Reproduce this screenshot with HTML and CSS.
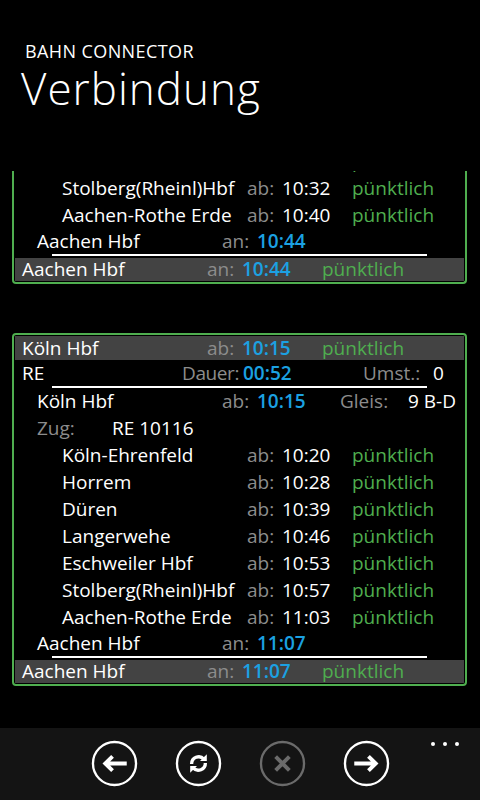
FILE: index.html
```html
<!DOCTYPE html>
<html lang="de">
<head>
<meta charset="utf-8">
<title>Verbindung</title>
<link rel="stylesheet" href="styles.css">
</head>
<body>
<div class="screen">
  <header class="header">
    <div class="app-name">BAHN CONNECTOR</div>
    <h1 class="page-title">Verbindung</h1>
  </header>

  <main class="list">
    <section class="card card-scrolled">
      <div class="row stop"><span class="name">Eschweiler Hbf</span><span class="lbl">ab:</span><span class="time">10:27</span><span class="ok">pünktlich</span></div>
      <div class="row stop"><span class="name">Stolberg(Rheinl)Hbf</span><span class="lbl">ab:</span><span class="time">10:32</span><span class="ok">pünktlich</span></div>
      <div class="row stop"><span class="name">Aachen-Rothe Erde</span><span class="lbl">ab:</span><span class="time">10:40</span><span class="ok">pünktlich</span></div>
      <div class="row arr"><span class="name">Aachen Hbf</span><span class="lbl">an:</span><span class="time blue">10:44</span></div>
      <div class="rule"></div>
      <div class="band band-bottom"><span class="name">Aachen Hbf</span><span class="lbl">an:</span><span class="time blue">10:44</span><span class="ok">pünktlich</span></div>
    </section>

    <section class="card">
      <div class="band band-top"><span class="name">Köln Hbf</span><span class="lbl">ab:</span><span class="time blue">10:15</span><span class="ok">pünktlich</span></div>
      <div class="row summary"><span class="name">RE</span><span class="lbl tight">Dauer:</span><span class="time blue">00:52</span><span class="lbl">Umst.:</span><span class="val">0</span></div>
      <div class="rule"></div>
      <div class="row dep"><span class="name">Köln Hbf</span><span class="lbl">ab:</span><span class="time blue">10:15</span><span class="lbl">Gleis:</span><span class="val">9 B-D</span></div>
      <div class="row zug"><span class="lbl">Zug:</span><span class="val">RE 10116</span></div>
      <div class="row stop"><span class="name">Köln-Ehrenfeld</span><span class="lbl">ab:</span><span class="time">10:20</span><span class="ok">pünktlich</span></div>
      <div class="row stop"><span class="name">Horrem</span><span class="lbl">ab:</span><span class="time">10:28</span><span class="ok">pünktlich</span></div>
      <div class="row stop"><span class="name">Düren</span><span class="lbl">ab:</span><span class="time">10:39</span><span class="ok">pünktlich</span></div>
      <div class="row stop"><span class="name">Langerwehe</span><span class="lbl">ab:</span><span class="time">10:46</span><span class="ok">pünktlich</span></div>
      <div class="row stop"><span class="name">Eschweiler Hbf</span><span class="lbl">ab:</span><span class="time">10:53</span><span class="ok">pünktlich</span></div>
      <div class="row stop"><span class="name">Stolberg(Rheinl)Hbf</span><span class="lbl">ab:</span><span class="time">10:57</span><span class="ok">pünktlich</span></div>
      <div class="row stop"><span class="name">Aachen-Rothe Erde</span><span class="lbl">ab:</span><span class="time">11:03</span><span class="ok">pünktlich</span></div>
      <div class="row arr"><span class="name">Aachen Hbf</span><span class="lbl">an:</span><span class="time blue">11:07</span></div>
      <div class="rule"></div>
      <div class="band band-bottom"><span class="name">Aachen Hbf</span><span class="lbl">an:</span><span class="time blue">11:07</span><span class="ok">pünktlich</span></div>
    </section>
  </main>

  <nav class="appbar">
    <button class="icon-btn" aria-label="zurück">
      <svg viewBox="0 0 48 48" width="47" height="47"><circle cx="24" cy="24" r="22" fill="none" stroke="#fff" stroke-width="2.4"/><path d="M36.5 24H15.5M22 16.8L14.6 24L22 31.2" fill="none" stroke="#fff" stroke-width="4"/></svg>
    </button>
    <button class="icon-btn" aria-label="aktualisieren">
      <svg viewBox="0 0 48 48" width="47" height="47"><circle cx="24" cy="24" r="22" fill="none" stroke="#fff" stroke-width="2.4"/><path d="M17 24.5A7.2 7.2 0 0 1 29.5 19.5" fill="none" stroke="#fff" stroke-width="3.4"/><path d="M25.5 21.5H32.5V14.5Z" fill="#fff"/><path d="M31 23.5A7.2 7.2 0 0 1 18.5 28.5" fill="none" stroke="#fff" stroke-width="3.4"/><path d="M22.5 26.5H15.5V33.5Z" fill="#fff"/></svg>
    </button>
    <button class="icon-btn" aria-label="abbrechen" disabled>
      <svg viewBox="0 0 48 48" width="47" height="47"><circle cx="24" cy="24" r="22" fill="none" stroke="#6b6b6b" stroke-width="2.4"/><path d="M17 17L31 31M31 17L17 31" fill="none" stroke="#6b6b6b" stroke-width="4"/></svg>
    </button>
    <button class="icon-btn" aria-label="weiter">
      <svg viewBox="0 0 48 48" width="47" height="47"><circle cx="24" cy="24" r="22" fill="none" stroke="#fff" stroke-width="2.4"/><path d="M11.5 24H32.5M26 16.8L33.4 24L26 31.2" fill="none" stroke="#fff" stroke-width="4"/></svg>
    </button>
    <div class="more"><span></span><span></span><span></span></div>
  </nav>
</div>
</body>
</html>
```

FILE: styles.css
```css
html, body {
  margin: 0;
  padding: 0;
  background: #000;
}

body {
  font-family: "Open Sans", "Segoe UI", sans-serif;
  color: #fff;
}

.screen {
  width: 480px;
  height: 800px;
  display: flex;
  flex-direction: column;
  overflow: hidden;
  background: #000;
}

.header {
  height: 171px;
  flex: none;
  padding-top: 40px;
  box-sizing: border-box;
}

.app-name {
  margin-left: 25px;
  font-size: 18px;
  line-height: 22px;
  letter-spacing: 0.4px;
}

.page-title {
  margin: 0 0 0 21px;
  font-size: 44px;
  line-height: 52px;
  font-weight: 300;
  letter-spacing: 1px;
}

.list {
  flex: 1;
  overflow: hidden;
}

.card {
  margin: 49px 0 0 12px;
  width: 455px;
  box-sizing: border-box;
  border: 2px solid #4fae4f;
  border-radius: 4px;
  padding: 1px;
  font-size: 19px;
  white-space: nowrap;
}

.card-scrolled {
  margin-top: -23px;
  border-top: 0;
  border-top-left-radius: 0;
  border-top-right-radius: 0;
  padding-top: 0;
}

.row, .band {
  display: grid;
  align-items: center;
  line-height: 27px;
  height: 27px;
}

.lbl { color: #8c8c8c; }
.tight { letter-spacing: -0.4px; }
.time { color: #fff; }
.blue { color: #1ba1e2; font-weight: 600; }
.ok { color: #4fae4f; }
.val { color: #fff; }

.band {
  background: #434343;
  padding-left: 7px;
  grid-template-columns: 185px 35px 80px auto;
}

.band-top {
  height: 24px;
  line-height: 24px;
}

.band-bottom {
  height: 23px;
  line-height: 23px;
  margin-top: 2px;
}

.summary {
  height: 26px;
  line-height: 26px;
  padding-left: 7px;
  grid-template-columns: 160px 61px 120px 70px auto;
}

.dep {
  padding-left: 22px;
  grid-template-columns: 185px 35px 83px 68px auto;
}

.zug {
  padding-left: 22px;
  grid-template-columns: 75px auto;
}

.stop {
  padding-left: 47px;
  grid-template-columns: 185px 35px 70px auto;
}

.arr {
  height: 25px;
  line-height: 25px;
  padding-left: 22px;
  grid-template-columns: 185px 35px auto;
}

.rule {
  margin-left: 37px;
  width: 375px;
  height: 2px;
  background: #fff;
}

.appbar {
  position: relative;
  flex: none;
  height: 72px;
  background: #141414;
  display: flex;
  justify-content: center;
  align-items: flex-start;
  gap: 37px;
  padding-top: 12px;
  box-sizing: border-box;
}

.icon-btn {
  width: 47px;
  height: 47px;
  padding: 0;
  margin: 0;
  border: 0;
  background: none;
  display: block;
}

.icon-btn svg { display: block; }

.more {
  position: absolute;
  top: 14px;
  right: 21px;
  display: flex;
  gap: 8px;
}

.more span {
  width: 4px;
  height: 4px;
  border-radius: 50%;
  background: #fff;
}
```
